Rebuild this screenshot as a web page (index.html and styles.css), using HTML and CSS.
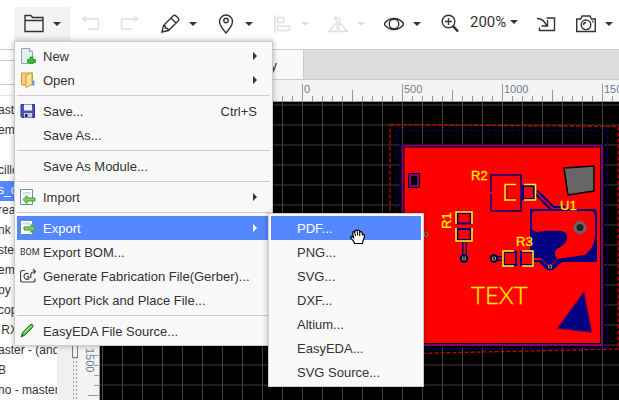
FILE: index.html
```html
<!DOCTYPE html>
<html lang="en">
<head>
  <meta charset="UTF-8">
  <meta name="viewport" content="width=device-width, initial-scale=1.0">
  <title>EasyEDA</title>
  <link rel="stylesheet" href="styles.css">
</head>
<body>
  <header class="toolbar">
    <div class="dropdown">
      <button class="tool open" aria-label="File">
        <svg class="icon" viewBox="0 0 20 20"><path d="M1 17.500V1.500h6l1.500 2H19v14z M1 6.500h18"/></svg>
        <span class="caret"></span>
      </button>
      <ul class="menu">
        <li><button class="item">
          <svg class="pic" viewBox="0 0 16 16"><path d="M1.500.5h8l3 3v12h-11z" fill="#e4eff3" stroke="#8fa5ae"/><path d="M9.500.5v3h3" fill="#fff" stroke="#8fa5ae"/><path d="M10 9h3v2.500h2.500v3H13V16h-3v-1.500H7.500v-3H10z" fill="#3dbb2c" stroke="#178a14" stroke-width=".7"/></svg>
          New<span class="arrow"></span></button></li>
        <li><button class="item">
          <svg class="pic" viewBox="0 0 16 16"><path d="M1.500 1h11v12h-11z" fill="#f3cf7c" stroke="#d39a3a"/><path d="M6 3.500l6-3v12l-6 3z" fill="#fbe2a0" stroke="#d39a3a"/><path d="M12.500 8l2 1v4l-2 1z" fill="#5aa0e6"/></svg>
          Open<span class="arrow"></span></button></li>
        <li class="line"></li>
        <li><button class="item">
          <svg class="pic" viewBox="0 0 16 16"><path d="M1 1.500h13.500v13H2l-1-1z" fill="#4a54bd" stroke="#2d3590"/><path d="M4 1.500h8v6H4z" fill="#eef2fa"/><path d="M4 10h8v4.500H4z" fill="#c6cae0"/><path d="M5 11h2.500v3H5z" fill="#20286a"/></svg>
          Save...<span class="key">Ctrl+S</span></button></li>
        <li><button class="item">Save As...</button></li>
        <li class="line"></li>
        <li><button class="item">Save As Module...</button></li>
        <li class="line"></li>
        <li><button class="item">
          <svg class="pic" viewBox="0 0 16 16"><path d="M.5.5h12v15H.5z" fill="#fff" stroke="#6b8fae"/><path d="M2.500 3h8v2h-8z" fill="#cfe0ee"/><path d="M3 10.500l4-4v2.500h8v3H7v2.500z" fill="#7fd65a" stroke="#3a9a2a"/></svg>
          Import<span class="arrow"></span></button></li>
        <li class="line"></li>
        <li class="dropdown"><button class="item active">
          <svg class="pic" viewBox="0 0 16 16"><path d="M.5.5h12v14H.5z" fill="#fff" stroke="#6b8fae"/><path d="M2.500 2.500h8v2h-8z" fill="#cfe0ee"/><path d="M15 8.500l-4-4V7H4v3h7v2.500z" fill="#7fd65a" stroke="#3a9a2a"/></svg>
          Export<span class="arrow"></span></button>
          <ul class="menu submenu">
            <li><button class="item active">PDF...</button></li>
            <li><button class="item">PNG...</button></li>
            <li><button class="item">SVG...</button></li>
            <li><button class="item">DXF...</button></li>
            <li><button class="item">Altium...</button></li>
            <li><button class="item">EasyEDA...</button></li>
            <li><button class="item">SVG Source...</button></li>
          </ul>
          <svg class="pointer" viewBox="0 0 16 16"><path d="M4.500 14.500c0-2-3.500-4.500-3.800-6.200C.5 7 2 6.800 3.500 8.500L2.700 3.800c0-1.500 1.700-1.600 2 0L5 2c.3-1.300 2-1.300 2.200 0C7.500.8 9.500.8 9.700 2.200l.2 1c.6-1 2-.6 2.200.5l.3 2c.8-.8 2-.4 2.100.8 0 3-1.800 4.500-2 8z" fill="#fff" stroke="#000" stroke-width="1.200"/><path d="M4.700 3.800l1 3.200M7.200 2l.5 4.500M9.700 2.500V7" fill="none" stroke="#000"/></svg>
        </li>
        <li><button class="item"><span class="bom">BOM</span>Export BOM...</button></li>
        <li><button class="item">
          <svg class="pic" viewBox="0 0 16 16" fill="none" stroke="#444" stroke-width="1.200"><path d="M5 2.500H2.500a2 2 0 0 0-2 2V12a2 2 0 0 0 2 2H13a2 2 0 0 0 2-2v-1.500"/><path d="M8.500 6.200C7.500 5 4 5 4 8.300S7.500 11.800 8.800 10.700V8.500H7M10.800 10V7q0-3 4-3.500M12.800 1l2.700 2.300-2 2.700"/></svg>
          Generate Fabrication File(Gerber)...</button></li>
        <li><button class="item">Export Pick and Place File...</button></li>
        <li class="line"></li>
        <li><button class="item">
          <svg class="pic" viewBox="0 0 16 16"><path d="M1 14l1.500-4.500L10 2q2-2 3 .5l-.5 2L5 12z" fill="#4fc23c" stroke="#1e7d1c"/><path d="M4 10.500l7-7.500" stroke="#b5f09a"/><path d="M1 14l1-3 2 1.500z" fill="#555"/></svg>
          EasyEDA File Source...</button></li>
      </ul>
    </div>
    <button class="tool off" aria-label="Undo"><svg class="icon" viewBox="0 0 20 20"><path d="M6 2.500L2.500 5 6 7.500M3 5h14.500q1 0 1 1v8q0 1-1 1h-9"/></svg></button>
    <button class="tool off" aria-label="Redo"><svg class="icon" viewBox="0 0 20 20"><path d="M14 2.500L17.500 5 14 7.500M17 5H2.500q-1 0-1 1v8q0 1 1 1h9"/></svg></button>
    <button class="tool" aria-label="Draw"><svg class="icon" viewBox="0 0 20 20"><path d="M2 18l1.500-6.500L13 2q1.500-1.500 3 0l2 2q1.500 1.500 0 3l-9.500 9.500zM3.500 11.500q2 0 2 2.500 2.500 0 3 2.500M11 4l5 5"/></svg><span class="caret"></span></button>
    <button class="tool" aria-label="Place"><svg class="icon" viewBox="0 0 20 20"><path d="M10 19Q3.500 11.500 3.500 7.500a6.500 6.500 0 0 1 13 0Q16.500 11.500 10 19z"/><circle cx="10" cy="6.500" r="2.200"/></svg><span class="caret"></span></button>
    <button class="tool off" aria-label="Align"><svg class="icon" viewBox="0 0 20 20"><path d="M3 1v18M5.500 3.500h6v5h-6zM5.500 12h12v4.500h-12z"/></svg><span class="caret"></span></button>
    <button class="tool off" aria-label="Rotate"><svg class="icon" viewBox="0 0 20 20"><path d="M9 8L1 17.500h8zM11 8v9.500h8zM6 4.500q5-2.500 7 2.500M8.500 1.500L6 4.500l3.500 1.500"/></svg><span class="caret"></span></button>
    <button class="tool" aria-label="View"><svg class="icon" viewBox="0 0 20 20"><path d="M0 10Q4 4.500 10 4.500T20 10Q16 15.500 10 15.500T0 10z"/><circle cx="10" cy="10" r="4.800"/></svg><span class="caret"></span></button>
    <button class="tool" aria-label="Zoom in"><svg class="icon" viewBox="0 0 20 20"><circle cx="8.500" cy="7.500" r="6.300"/><path d="M8.500 4v7M5 7.500h7"/><path d="M13 12l5 5.500" stroke-width="2.600"/></svg></button>
    <button class="tool zoom">200%<span class="caret"></span></button>
    <button class="tool" aria-label="Import changes"><svg class="icon" viewBox="0 0 20 20"><path d="M10.500 4h8v12.500h-15v-3M1 4.500q6-.5 9.500 7M11.500 6v6H5.500"/></svg></button>
    <button class="tool" aria-label="Photo view"><svg class="icon" viewBox="0 0 20 20"><path d="M.7 5h4L6 2h8l1.300 3h4v12.500H.700z"/><circle cx="10" cy="10.800" r="4.800"/><path d="M7.500 11q0-2.500 2.500-2.500M16 7.500h1.500"/></svg><span class="caret"></span></button>
  </header>

  <main class="workspace">
    <aside class="sidebar">
      <div class="search"></div>
      <div class="filter"></div>
      <ul class="tree">
        <li>aster</li>
        <li>emp</li>
        <li></li>
        <li>cillo</li>
        <li class="selected">s_co</li>
        <li>rea</li>
        <li>nk</li>
        <li>ster</li>
        <li>emp</li>
        <li>py</li>
        <li>copy</li>
        <li>&nbsp;RX</li>
        <li>aster - (andy)</li>
        <li>B</li>
        <li>no - master</li>
      </ul>
    </aside>
    <div class="gutter"></div>
    <section class="editor">
      <nav class="tabs"><a class="tab" href="#">y</a></nav>
      <div class="sheet">
        <div class="splitter"><div class="handle"></div></div>
        <div class="corner"></div>
        <div class="ruler top"><span>-1000</span><span>-500</span><span>0</span><span>500</span><span>1000</span><span>1500</span></div>
        <div class="ruler left"><span>500</span><span>1000</span><span>1500</span></div>
        <div class="canvas">
          <svg class="board" width="519" height="298" viewBox="100 102 519 298" fill="none">
            <!-- outlines -->
            <path d="M390 124.500L618 126.500V349L390 354z" stroke="#c80000" stroke-width="1.300" stroke-dasharray="4 2"/>
            <path d="M396.500 130.500H607.500V348.500H396.500z" stroke="#000080" stroke-dasharray="4 2"/>
            <path d="M402.500 145.500H602V345H402.500z" fill="#f00" stroke="#000" stroke-width="4"/>
            <path d="M402.500 145.500H602V345H402.500z" stroke="#800080" stroke-width="2"/>
            <path d="M409.500 174.500h9v12h-9z" fill="#000" stroke="#000" stroke-width="3"/>
            <path d="M410 175h8v11h-8z" stroke="#800080" stroke-width="2"/>
            <path d="M564 168l30-2v25l-26 4z" fill="#666" stroke="#000" stroke-width="1.500"/>
            <path d="M584 291.500l8 41-35-4z" fill="#000080" stroke="#a00030"/>
            <!-- R2 -->
            <path d="M491 192v-17h30v36h-30v-17" stroke="#000080" stroke-width="1.500"/>
            <path d="M516 186h-9v13h9" stroke="#a00000"/>
            <path d="M523 186h11v13h-11z" stroke="#000080" stroke-width="2"/>
            <path d="M536 192l17 17h12" stroke="#000080" stroke-width="6"/>
            <path d="M536 192l17 17h12" stroke="#f00" stroke-width="1.500"/>
            <path d="M516 184.500h-11v15.500h11M524 184.500h11.500v15.500H524" stroke="#ff0" stroke-width="1.500"/>
            <!-- copper pour -->
            <path d="M530 209h65l2 3v50h-35l-7 6q-5 5-10 0l-6-6h-9z" fill="#000080"/>
            <path d="M534 211h58q3 2 3 6v19q-1 12-10 19l-28 4q-4-7 0-10 9-5 10-10 1-7-6-8-14-1-23 1-4 0-6-3v-15z" fill="#f00"/>
            <path d="M533 259h8l9 8 8-9" stroke="#f00"/>
            <circle cx="580" cy="227.500" r="5" fill="#222" stroke="#666" stroke-width="3"/>
            <!-- R1 -->
            <path d="M457.500 213h13v10.500h-13zM457.500 229h13v11h-13z" stroke="#000080" stroke-width="2"/>
            <path d="M456 224v-12h16v12M456 228v13h16v-13" stroke="#ff0" stroke-width="1.500"/>
            <path d="M464.500 242v16" stroke="#000080" stroke-width="5"/>
            <path d="M464.500 242v16" stroke="#f00" stroke-width="2"/>
            <!-- R3 -->
            <path d="M494 258.500h10M533 259h6" stroke="#000080" stroke-width="5"/>
            <path d="M494 258.500h10M533 259h8" stroke="#f00" stroke-width="2"/>
            <path d="M504 252h12v13h-12zM521 252h12v13h-12z" fill="#f00" stroke="#000080" stroke-width="2"/>
            <path d="M514 251h-11v15h11M522 251h11v15h-11" stroke="#ff0" stroke-width="1.500"/>
            <!-- vias -->
            <g fill="#000" stroke="#000080"><circle cx="464" cy="258.500" r="4"/><circle cx="494" cy="258.500" r="4"/></g>
            <path d="M462.500 257h3v3h-3zM492.500 257h3v3h-3zM548.500 265h3v3h-3zM424.500 233h3v3h-3z" fill="#222" stroke="#888"/>
            <g class="silk">
              <text x="471" y="180">R2</text>
              <text x="560" y="210">U1</text>
              <text x="516" y="246">R3</text>
              <text transform="translate(451 229) rotate(-90)">R1</text>
              <text class="big" x="471" y="304">TEXT</text>
            </g>
          </svg>
        </div>
      </div>
    </section>
  </main>
</body>
</html>
```
FILE: styles.css
```css
* {
  box-sizing: border-box;
}
body {
  margin: 0;
  height: 100vh;
  display: flex;
  flex-direction: column;
  overflow: hidden;
  font-family: "Liberation Sans", Arial, sans-serif;
  font-size: 13px;
  color: #333;
  background: #fff;
}
button {
  border: none;
  background: none;
  font: inherit;
  color: inherit;
  cursor: pointer;
}
ul {
  list-style: none;
  margin: 0;
  padding: 0;
}

/* toolbar */
.toolbar {
  display: flex;
  flex: none;
  height: 49px;
  padding: 7px 0 8px 14px;
}
.dropdown {
  position: relative;
}
.tool {
  display: flex;
  flex: none;
  align-items: center;
  gap: 9px;
  height: 34px;
  padding: 0 9px 0 10px;
}
.tool.open {
  background: #f3f3f3;
}
.tool.off {
  opacity: 0.15;
}
.icon {
  width: 20px;
  height: 20px;
  fill: none;
  stroke: #333;
  stroke-width: 1.4;
}
.tool > .icon:only-child {
  margin-right: 1px;
}
.caret {
  border: 4px solid transparent;
  border-top-color: #333;
  border-bottom: none;
}
.tool.zoom {
  width: 56px;
  height: 30px;
  gap: 4px;
  padding: 0;
  font-family: Roboto, sans-serif;
  font-size: 15px;
}

/* menus */
.menu {
  position: absolute;
  z-index: 10;
  top: 34px;
  left: 0;
  width: 259px;
  padding: 2px;
  border: 1px solid #ccc;
  background: #f9f9f9;
  box-shadow: 0 0 6px rgba(0, 0, 0, 0.3);
}
.submenu {
  top: -3px;
  left: 251px;
  width: 156px;
}
.item {
  display: flex;
  align-items: center;
  position: relative;
  width: 100%;
  height: 24px;
  padding: 0 13px 0 26px;
  text-align: left;
  white-space: nowrap;
}
.item.active {
  background: #58f;
  color: #fff;
}
.line {
  height: 1px;
  margin: 3px 0;
  background: #ccc;
}
.pic, .bom {
  position: absolute;
  left: 3px;
  width: 16px;
  height: 16px;
}
.bom {
  font-family: Roboto, sans-serif;
  font-size: 9px;
  line-height: 16px;
}
.arrow {
  margin-left: auto;
  border: 4px solid transparent;
  border-left-color: currentColor;
  border-right: none;
}
.key {
  margin-left: auto;
}
.pointer {
  position: absolute;
  z-index: 20;
  top: 13px;
  left: 333px;
  width: 16px;
  height: 16px;
}

/* workspace */
.workspace {
  display: flex;
  flex: 1;
  min-height: 0;
  border-top: 1px solid #ccc;
}
.sidebar {
  flex: none;
  width: 57px;
  overflow: hidden;
  font-size: 12px;
  white-space: nowrap;
}
.search {
  height: 25px;
  margin-top: 10px;
  border: solid #ccc;
  border-width: 1px 0;
}
.filter {
  height: 11px;
  border-bottom: 1px solid #e8e8e8;
}
.tree {
  padding-top: 5px;
}
.tree li {
  height: 20px;
  line-height: 18px;
  text-indent: -2px;
}
.tree .selected {
  background: #58f;
  color: #fff;
}
.gutter {
  flex: none;
  width: 15px;
  background: #f0f0f0;
}
.editor {
  display: flex;
  flex: 1;
  flex-direction: column;
  min-width: 0;
}
.tabs {
  display: flex;
  flex: none;
  height: 30px;
  border-bottom: 1px solid #ccc;
  background: #ddd;
}
.tab {
  width: 232px;
  padding-right: 26px;
  border-right: 1px solid #ccc;
  background: #f9f9f9;
  color: #333;
  line-height: 32px;
  text-align: right;
  text-decoration: none;
}
.sheet {
  display: grid;
  flex: 1;
  grid-template: 22px 1fr / 6px 22px 1fr;
  min-height: 0;
}
.splitter {
  grid-row: 1 / 3;
  background: radial-gradient(#aaa 1px, #eee 1px) 0 0 / 3px 4px;
}
.handle {
  height: 278px;
  border: 1px solid #867878;
  background: #f4f4f4;
}
.corner {
  background: #f4f4f4;
}
.ruler {
  --tick: #999 1px, transparent 1px;
  display: flex;
  overflow: hidden;
  background-color: #f4f4f4;
  color: #708090;
  font-size: 11px;
}
.ruler span {
  flex: none;
}
.ruler.top {
  padding-left: 2px;
  border-bottom: 1px solid #999;
  background-image: linear-gradient(to right, var(--tick)), linear-gradient(to right, var(--tick)), linear-gradient(to right, var(--tick));
  background-position: 2px 100%, 52px 100%, 2px 100%;
  background-size: 10px 5px, 100px 11px, 100px 17px;
  background-repeat: repeat-x;
}
.ruler.top span {
  width: 100px;
  padding-left: 2px;
  line-height: 19px;
}
.ruler.left {
  flex-direction: column;
  padding-top: 43px;
  border-right: 1px solid #999;
  background-image: linear-gradient(var(--tick)), linear-gradient(var(--tick)), linear-gradient(var(--tick));
  background-position: 100% 3px, 100% 93px, 100% 43px;
  background-size: 5px 10px, 11px 100px, 17px 100px;
  background-repeat: repeat-y;
}
.ruler.left span {
  height: 100px;
  padding-top: 3px;
  line-height: 19px;
  writing-mode: vertical-rl;
}
.canvas {
  overflow: hidden;
  background-color: #000;
  background-image: linear-gradient(to right, #444 1px, transparent 1px), linear-gradient(#1e1e1e 2px, transparent 2px);
  background-position: 2px 2px;
  background-size: 20px 20px;
}
.board {
  display: block;
}
.silk {
  fill: #fe0;
  stroke: #fe0;
  stroke-width: 0.3;
  font-size: 13px;
}
.silk .big {
  font-family: Lato, sans-serif;
  font-size: 24px;
  font-weight: 300;
}
```
